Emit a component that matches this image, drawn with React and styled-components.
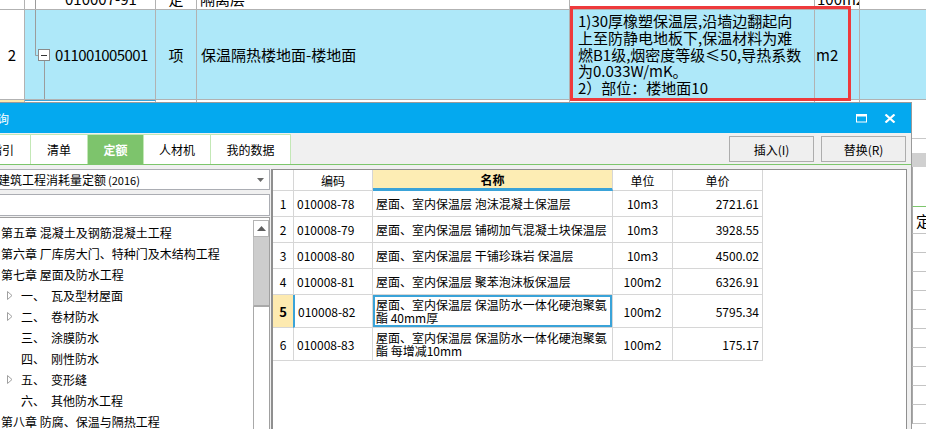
import React from "react";
import styled, { createGlobalStyle } from "styled-components";

const GlobalStyle = createGlobalStyle`
  html, body {
    margin: 0;
    padding: 0;
    background: #fff;
    overflow: hidden;
  }
  body {
    font-family: "Noto Sans CJK SC", "Noto Sans", sans-serif;
    color: #000;
  }
`;

const treeItems = [
  { text: "第五章 混凝土及钢筋混凝土工程" },
  { text: "第六章 厂库房大门、特种门及木结构工程" },
  { text: "第七章 屋面及防水工程" },
  { num: "一、", text: "瓦及型材屋面", twisty: true },
  { num: "二、", text: "卷材防水", twisty: true },
  { num: "三、", text: "涂膜防水" },
  { num: "四、", text: "刚性防水" },
  { num: "五、", text: "变形缝", twisty: true },
  { num: "六、", text: "其他防水工程" },
  { text: "第八章 防腐、保温与隔热工程" },
];

const rows = [
  { no: "1", code: "010008-78", name: ["屋面、室内保温层 泡沫混凝土保温层"], unit: "10m3", price: "2721.61" },
  { no: "2", code: "010008-79", name: ["屋面、室内保温层 铺砌加气混凝土块保温层"], unit: "10m3", price: "3928.55" },
  { no: "3", code: "010008-80", name: ["屋面、室内保温层 干铺珍珠岩 保温层"], unit: "10m3", price: "4500.02" },
  { no: "4", code: "010008-81", name: ["屋面、室内保温层 聚苯泡沫板保温层"], unit: "100m2", price: "6326.91" },
  { no: "5", code: "010008-82", name: ["屋面、室内保温层 保温防水一体化硬泡聚氨", "酯 40mm厚"], unit: "100m2", price: "5795.34", active: true },
  { no: "6", code: "010008-83", name: ["屋面、室内保温层 保温防水一体化硬泡聚氨", "酯 每增减10mm"], unit: "100m2", price: "175.17" },
];

const tabs = [
  { label: "指引", w: 57, lead: true },
  { label: "清单", w: 57 },
  { label: "定额", w: 56, on: true },
  { label: "人材机", w: 67 },
  { label: "我的数据", w: 80 },
];

const sideLines = [0, 1, 2, 3, 4, 5, 6, 7, 8, 9];

function App() {
  return (
    <Screen>
      <GlobalStyle />
      <Sheet>
        <SheetRow $h={10}>
          <SheetCell $clip />
          <SheetCell $clip>
            <Stem />
            010007-91
          </SheetCell>
          <SheetCell $clip $center>定</SheetCell>
          <SheetCell $clip $pl={3}>隔离层</SheetCell>
          <SheetCell $clip />
          <SheetCell $clip $pl={2}>100m2</SheetCell>
          <SheetCell $clip $last />
        </SheetRow>
        <SheetRow $h={90} $bg="#aee8f9">
          <SheetCell $center $bg="#fff">2</SheetCell>
          <SheetCell $tight>
            <TreeGlyph width="30" height="89" viewBox="0 0 30 89">
              <path d="M10.5 0 V45.5 H13" stroke="#9c9c9c" fill="none" />
              <rect x="13.5" y="39.5" width="11" height="11" fill="#fff" stroke="#8a8a8a" />
              <path d="M16 45.5 H22" stroke="#333" />
              <path d="M19.5 51 V89" stroke="#9c9c9c" />
            </TreeGlyph>
            011001005001
          </SheetCell>
          <SheetCell $center>项</SheetCell>
          <SheetCell $pl={4}>保温隔热楼地面-楼地面</SheetCell>
          <SheetCell $top>
            <Feature>
              <div>1)30厚橡塑保温层,沿墙边翻起向</div>
              <div>上至防静电地板下,保温材料为难</div>
              <div>燃B1级,烟密度等级≤50,导热系数</div>
              <div>为0.033W/mK。</div>
              <div>2）部位：楼地面10</div>
            </Feature>
          </SheetCell>
          <SheetCell $pl={1}>m2</SheetCell>
          <SheetCell $last />
        </SheetRow>
        <NextRow>
          <NextCell $bg="#fde9b0" />
          <NextCell $focus />
          <NextCell />
          <NextCell />
          <NextCell />
          <NextCell />
          <NextCell $last />
        </NextRow>
        <Lower>
          <Covered />
          <SidePanel>
            <SideBlock $h={36} $line="#c8c8c8" />
            <SideBlock $h={14} />
            <SideBlock $h={14} $bg="#d0d0d0" />
            <SideBlock $h={40} $line="#7dc66c" $edge />
            <SideRow $h={27}>定</SideRow>
            {sideLines.map((i) => (
              <SideRow key={i} $h={19} />
            ))}
          </SidePanel>
        </Lower>
      </Sheet>
      <RedMark />

      <Dialog>
        <TitleBar>
          <Title>查询</Title>
          <WinButtons>
            <svg width="11" height="9" viewBox="0 0 11 9">
              <rect x="0.5" y="0.5" width="10" height="7.5" fill="none" stroke="#fff" />
              <rect x="0" y="0" width="11" height="2.5" fill="#fff" />
            </svg>
            <svg width="12" height="9" viewBox="0 0 12 9">
              <path d="M1.5 0.5 L10.5 8.5 M10.5 0.5 L1.5 8.5" stroke="#fff" strokeWidth="2.2" />
            </svg>
          </WinButtons>
        </TitleBar>
        <TabBar>
          {tabs.map((t) => (
            <Tab key={t.label} $w={t.w} $on={t.on} $lead={t.lead}>
              {t.label}
            </Tab>
          ))}
          <Actions>
            <ActionButton>插入(I)</ActionButton>
            <ActionButton>替换(R)</ActionButton>
          </Actions>
        </TabBar>
        <Body>
          <LeftCol>
            <Select>
              <SelectText>
                建筑工程消耗量定额<Small>(2016)</Small>
              </SelectText>
              <svg width="7" height="4" viewBox="0 0 7 4">
                <path d="M0 0 H7 L3.5 4 Z" fill="#6a6a6a" />
              </svg>
            </Select>
            <Search />
            <Tree>
              <TreeList>
                {treeItems.map((it) =>
                  it.num ? (
                    <TreeRow key={it.text}>
                      <Twisty>
                        {it.twisty && (
                          <svg width="6" height="9" viewBox="0 0 6 9">
                            <path d="M0.5 0.5 L5 4.5 L0.5 8.5 Z" fill="none" stroke="#a0a0a0" />
                          </svg>
                        )}
                      </Twisty>
                      <TreeNum>{it.num}</TreeNum>
                      {it.text}
                    </TreeRow>
                  ) : (
                    <TreeRow key={it.text} $chapter>
                      {it.text}
                    </TreeRow>
                  )
                )}
              </TreeList>
              <ScrollBar>
                <ScrollUp>
                  <svg width="9" height="5" viewBox="0 0 9 5">
                    <path d="M0 5 L4.5 0 L9 5 Z" fill="#5f5f5f" />
                  </svg>
                </ScrollUp>
                <Thumb />
                <Track />
              </ScrollBar>
            </Tree>
          </LeftCol>
          <TablePanel>
            <Grid>
              <HeadCell />
              <HeadCell>编码</HeadCell>
              <HeadCell $key>名称</HeadCell>
              <HeadCell>单位</HeadCell>
              <HeadCell>单价</HeadCell>
              {rows.map((r) => (
                <React.Fragment key={r.no}>
                  <Cell $center $active={r.active} $bold={r.active}>
                    {r.no}
                  </Cell>
                  <Cell $pl={3} $mark={r.active}>{r.code}</Cell>
                  <Cell $pl={3} $focus={r.active}>
                    <NameText>
                      {r.name.map((line) => (
                        <div key={line}>{line}</div>
                      ))}
                    </NameText>
                  </Cell>
                  <Cell $center>{r.unit}</Cell>
                  <Cell $right>{r.price}</Cell>
                </React.Fragment>
              ))}
            </Grid>
          </TablePanel>
        </Body>
      </Dialog>
    </Screen>
  );
}

export default App;

const COLS = "25px 131px 41px 373px 245px 45px 1fr";

const Screen = styled.div`
  position: relative;
  width: 926px;
  height: 429px;
  overflow: hidden;
  background: #fff;
`;

const Sheet = styled.div`
  display: flex;
  flex-direction: column;
`;

const SheetRow = styled.div`
  display: grid;
  grid-template-columns: ${COLS};
  height: ${(p) => p.$h}px;
  box-sizing: border-box;
  border-bottom: 1px solid #b2b2b2;
  background: ${(p) => p.$bg || "#fff"};
  font-size: 15px;
  overflow: hidden;
`;

const SheetCell = styled.div`
  display: flex;
  align-items: ${(p) => (p.$clip ? "flex-end" : p.$top ? "flex-start" : "center")};
  justify-content: ${(p) => (p.$center ? "center" : "flex-start")};
  padding-left: ${(p) => p.$pl || 0}px;
  box-sizing: border-box;
  border-right: ${(p) => (p.$last ? "none" : "1px solid #b2b2b2")};
  background: ${(p) => p.$bg || "transparent"};
  letter-spacing: ${(p) => (p.$tight ? "-0.6px" : "0")};
  line-height: 20px;
  white-space: nowrap;
  overflow: hidden;
`;

const NextRow = styled.div`
  display: grid;
  grid-template-columns: ${COLS};
  height: 3px;
  flex: none;
`;

const NextCell = styled.div`
  box-sizing: border-box;
  background: ${(p) => p.$bg || "#fff"};
  border-right: ${(p) => (p.$last ? "none" : "1px solid #b2b2b2")};
  border-top: ${(p) => (p.$focus ? "1px solid #3aa3d8" : "none")};
`;

const Stem = styled.span`
  align-self: stretch;
  width: 1px;
  margin: -20px 29px 0 10px;
  background: #9c9c9c;
`;

const TreeGlyph = styled.svg`
  flex: none;
  align-self: flex-start;
`;

const Feature = styled.div`
  padding: 3px 0 0 8px;
  font-size: 15px;
  line-height: 16.8px;
`;

const RedMark = styled.div`
  position: absolute;
  left: 570px;
  top: 6px;
  width: 281px;
  height: 95px;
  box-sizing: border-box;
  border: 3px solid #ee3a3c;
  pointer-events: none;
`;

const Lower = styled.div`
  display: flex;
  height: 330px;
`;

const Covered = styled.div`
  width: 912px;
  flex: none;
`;

const SidePanel = styled.div`
  flex: 1;
  display: flex;
  flex-direction: column;
`;

const SideBlock = styled.div`
  height: ${(p) => p.$h}px;
  flex: none;
  box-sizing: border-box;
  background: ${(p) => p.$bg || "#fff"};
  border-bottom: ${(p) => (p.$line ? `1px solid ${p.$line}` : "none")};
  border-left: ${(p) => (p.$edge ? "1px solid #a8a8a8" : "none")};
`;

const SideRow = styled.div`
  height: ${(p) => p.$h}px;
  flex: none;
  box-sizing: border-box;
  border-bottom: 1px solid #c4c4c4;
  border-left: 1px solid #a8a8a8;
  padding-left: 3px;
  display: flex;
  align-items: center;
  font-size: 15px;
  white-space: nowrap;
`;

const Dialog = styled.div`
  position: absolute;
  left: 0;
  top: 102px;
  width: 912px;
  height: 340px;
  box-sizing: border-box;
  border-top: 1px solid #9a9a9a;
  border-right: 1px solid #9a9a9a;
  background: #f0f0f0;
  display: flex;
  flex-direction: column;
  font-size: 12px;
`;

const TitleBar = styled.div`
  height: 30px;
  flex: none;
  background: #04a9ef;
  color: #fff;
  display: flex;
  align-items: center;
  padding-right: 15px;
`;

const Title = styled.span`
  margin-left: -15px;
  font-size: 12px;
`;

const WinButtons = styled.div`
  margin-left: auto;
  display: flex;
  align-items: center;
  gap: 17px;
`;

const TabBar = styled.div`
  height: 32px;
  flex: none;
  box-sizing: border-box;
  padding-top: 1px;
  border-bottom: 1px solid #7dc66c;
  display: flex;
  align-items: stretch;
`;

const Tab = styled.div`
  width: ${(p) => p.$w}px;
  margin-left: ${(p) => (p.$lead ? "-26px" : "0")};
  box-sizing: border-box;
  flex: none;
  display: flex;
  align-items: center;
  justify-content: center;
  background: ${(p) => (p.$on ? "#7dc46c" : "#fff")};
  color: ${(p) => (p.$on ? "#fff" : "#000")};
  font-weight: ${(p) => (p.$on ? 700 : 400)};
  border-top: 1px solid #c3e8b6;
  border-right: 1px solid #c3e8b6;
  font-size: 12px;
`;

const Actions = styled.div`
  margin-left: auto;
  display: flex;
  align-items: center;
  gap: 7px;
  padding-right: 5px;
`;

const ActionButton = styled.div`
  width: 85px;
  height: 26px;
  box-sizing: border-box;
  border: 1px solid #adadad;
  background: #efefef;
  display: flex;
  align-items: center;
  justify-content: center;
  font-size: 12px;
`;

const Body = styled.div`
  flex: 1;
  display: flex;
  gap: 1px;
  padding: 4px 4px 0 0;
  min-height: 0;
`;

const LeftCol = styled.div`
  width: 270px;
  flex: none;
  display: flex;
  flex-direction: column;
`;

const Select = styled.div`
  height: 21px;
  flex: none;
  box-sizing: border-box;
  background: #fff;
  border: 1px solid #abadb3;
  border-left: none;
  display: flex;
  align-items: center;
  padding-right: 5px;
`;

const SelectText = styled.span`
  flex: 1;
  margin-left: -2px;
  white-space: nowrap;
  font-size: 12px;
`;

const Small = styled.span`
  font-size: 11px;
  margin-left: 2px;
`;

const Search = styled.div`
  height: 22px;
  flex: none;
  margin-top: 4px;
  box-sizing: border-box;
  background: #fff;
  border: 1px solid #abadb3;
  border-left: none;
`;

const Tree = styled.div`
  flex: 1;
  margin-top: 1px;
  background: #fff;
  border-top: 1px solid #a0a0a0;
  border-right: 1px solid #a0a0a0;
  display: flex;
  min-height: 0;
`;

const TreeList = styled.div`
  flex: 1;
  padding-top: 4px;
  overflow: hidden;
`;

const TreeRow = styled.div`
  height: 21px;
  display: flex;
  align-items: center;
  padding-left: ${(p) => (p.$chapter ? "1px" : "0")};
  font-size: 12px;
  white-space: nowrap;
`;

const Twisty = styled.span`
  width: 21px;
  flex: none;
  display: flex;
  align-items: center;
  padding-left: 7px;
  box-sizing: border-box;
`;

const TreeNum = styled.span`
  width: 30px;
  flex: none;
`;

const ScrollBar = styled.div`
  width: 16px;
  flex: none;
  display: flex;
  flex-direction: column;
  padding-top: 2px;
`;

const ScrollUp = styled.div`
  height: 17px;
  box-sizing: border-box;
  border: 1px solid #b4b4b4;
  background: #fff;
  display: flex;
  align-items: center;
  justify-content: center;
`;

const Thumb = styled.div`
  height: 70px;
  box-sizing: border-box;
  background: #cdcdcd;
  border-left: 1px solid #bdbdbd;
  border-bottom: 2px solid #a9a9a9;
`;

const Track = styled.div`
  flex: 1;
  background: #fff;
  border-left: 1px solid #a9a9a9;
`;

const TablePanel = styled.div`
  flex: 1;
  background: #fff;
  border: 1px solid #8f8f8f;
  border-left-width: 2px;
  overflow: hidden;
`;

const Grid = styled.div`
  display: grid;
  grid-template-columns: 21px 79px 240px 60px 90px;
  grid-template-rows: 21px 26px 26px 26px 26px 33px 33px;
  width: 490px;
`;

const HeadCell = styled.div`
  box-sizing: border-box;
  border-right: 1px solid #d6d6d6;
  border-bottom: ${(p) => (p.$key ? "3px solid #3aa3d8" : "1px solid #d6d6d6")};
  background: ${(p) => (p.$key ? "#fdedb4" : "#fff")};
  font-weight: ${(p) => (p.$key ? 700 : 400)};
  display: flex;
  align-items: center;
  justify-content: center;
  font-size: 12px;
`;

const Cell = styled.div`
  box-sizing: border-box;
  border-right: 1px solid #d6d6d6;
  border-bottom: 1px solid #d6d6d6;
  border-left: ${(p) => (p.$mark ? "2px solid #3aa3d8" : "none")};
  margin-left: ${(p) => (p.$mark ? "-1px" : "0")};
  box-shadow: ${(p) => (p.$focus ? "inset 0 0 0 2px #3aa3d8" : "none")};
  background: ${(p) => (p.$active ? "#fdeab0" : "#fff")};
  font-weight: ${(p) => (p.$bold ? 700 : 400)};
  font-size: ${(p) => (p.$bold ? "13px" : "12px")};
  display: flex;
  align-items: center;
  justify-content: ${(p) => (p.$center ? "center" : p.$right ? "flex-end" : "flex-start")};
  padding-left: ${(p) => p.$pl || 0}px;
  padding-right: ${(p) => (p.$right ? "3px" : "0")};
  white-space: nowrap;
  overflow: hidden;
`;

const NameText = styled.div`
  line-height: 13.5px;
`;
